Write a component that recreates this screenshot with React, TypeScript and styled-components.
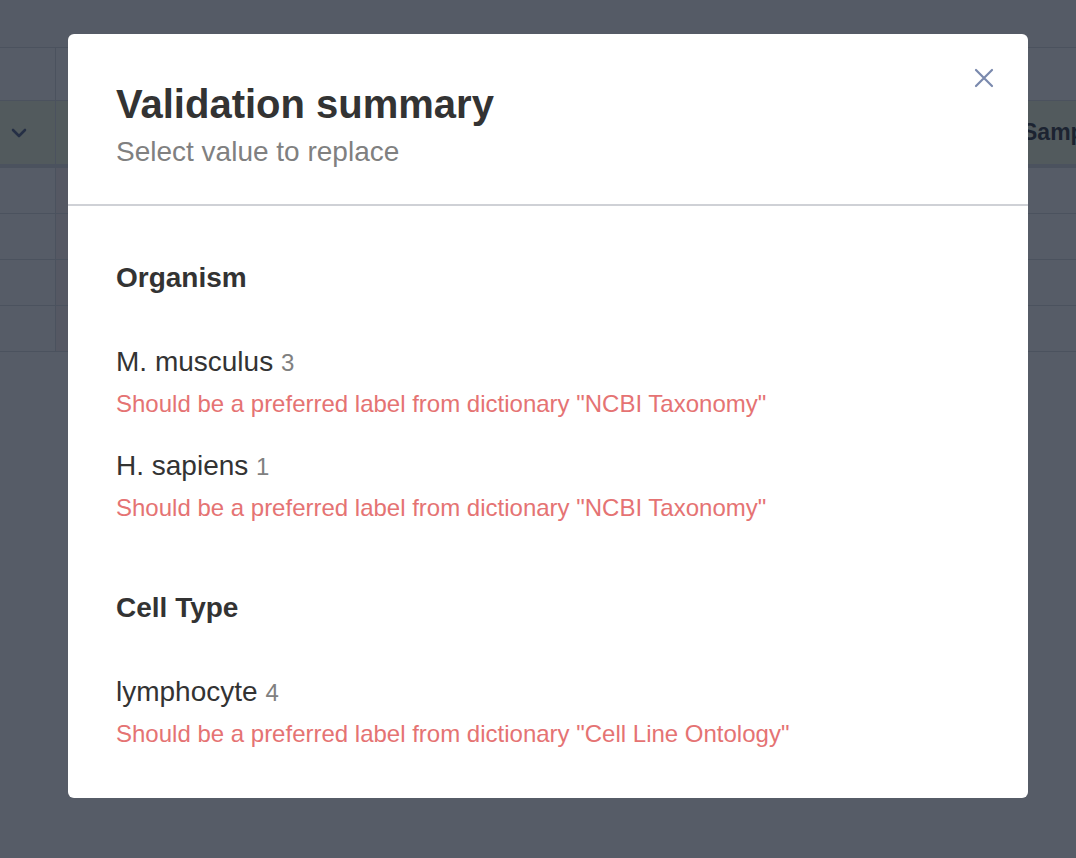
import React from "react";
import styled, { createGlobalStyle } from "styled-components";

const FONT = `"Liberation Sans", Arimo, Arial, Helvetica, sans-serif`;

const GlobalStyle = createGlobalStyle`
  html, body { margin: 0; padding: 0; background: #ffffff; }
  body { font-family: "Liberation Sans", Arial, sans-serif; }
  * { box-sizing: border-box; }
`;

const Page = styled.div`
  width: 1076px;
  height: 858px;
  overflow: hidden;
  background: #ffffff;
  position: relative;
  font-family: ${FONT};
`;

const TopBar = styled.div`
  height: 48px;
  background: #fbfbfc;
  border-bottom: 1px solid #d3d5dc;
`;

const Row = styled.div<{ $height: number; $tint?: string; $border?: number }>`
  display: grid;
  grid-template-columns: 56px 954px 1fr;
  height: ${(p) => p.$height}px;
  background: ${(p) => p.$tint ?? "#ffffff"};
  border-bottom: ${(p) => p.$border ?? 1}px solid #d3d5dc;
`;

const Cell = styled.div<{ $tint?: string }>`
  display: flex;
  align-items: center;
  padding-left: 11px;
  border-right: 1px solid #d3d5dc;
  background: ${(p) => p.$tint ?? "transparent"};
`;

const HeaderText = styled.div`
  display: flex;
  align-items: center;
  padding-left: 12px;
  font-family: ${FONT};
  font-weight: 700;
  font-size: 23px;
  color: #1a1d2b;
`;

const Overlay = styled.div`
  position: absolute;
  inset: 0;
  background: rgba(30, 37, 52, 0.75);
  display: flex;
  align-items: flex-start;
  padding: 34px 0 0 68px;
`;

const Modal = styled.div`
  position: relative;
  width: 960px;
  background: #ffffff;
  border-radius: 6px;
  color: #333333;
  font-family: ${FONT};
`;

const CloseButton = styled.button`
  position: absolute;
  top: 32px;
  right: 32px;
  width: 24px;
  height: 24px;
  padding: 0;
  border: none;
  background: transparent;
  display: flex;
  align-items: center;
  justify-content: center;
  cursor: pointer;
`;

const Header = styled.div`
  padding: 46px 48px 34px;
  border-bottom: 2px solid #cfd1d6;
`;

const Title = styled.h1`
  margin: 0;
  font-family: ${FONT};
  font-size: 40px;
  line-height: 48px;
  font-weight: 700;
  color: #333333;
`;

const Subtitle = styled.div`
  margin-top: 6px;
  font-family: ${FONT};
  font-size: 28px;
  line-height: 36px;
  color: #808080;
`;

const Body = styled.div`
  padding: 54px 48px 49px;
`;

const Section = styled.section`
  & + & {
    margin-top: 67px;
  }
`;

const SectionTitle = styled.h2`
  margin: 0 0 48px;
  font-family: ${FONT};
  font-size: 28px;
  line-height: 36px;
  font-weight: 700;
  color: #333333;
`;

const Item = styled.div`
  cursor: pointer;
  & + & {
    margin-top: 29px;
  }
`;

const ItemName = styled.div`
  font-family: ${FONT};
  font-size: 28px;
  line-height: 36px;
  color: #333333;
`;

const Count = styled.span`
  font-size: 24px;
  color: #808080;
`;

const ErrorText = styled.div`
  margin-top: 8px;
  font-family: ${FONT};
  font-size: 24px;
  line-height: 30px;
  color: #e57373;
`;

const Chevron = () => (
  <svg width="16" height="10" viewBox="0 0 16 10" fill="none">
    <path d="M2 2l6 6 6-6" stroke="#3e4c78" strokeWidth="2.6" strokeLinecap="round" strokeLinejoin="round" />
  </svg>
);

const CloseIcon = () => (
  <svg width="20" height="20" viewBox="0 0 20 20" fill="none">
    <path d="M2 2l16 16M18 2L2 18" stroke="#7a89ad" strokeWidth="2.2" strokeLinecap="round" />
  </svg>
);

const groups = [
  {
    title: "Organism",
    items: [
      { value: "M. musculus", count: 3, error: 'Should be a preferred label from dictionary "NCBI Taxonomy"' },
      { value: "H. sapiens", count: 1, error: 'Should be a preferred label from dictionary "NCBI Taxonomy"' },
    ],
  },
  {
    title: "Cell Type",
    items: [
      { value: "lymphocyte", count: 4, error: 'Should be a preferred label from dictionary "Cell Line Ontology"' },
    ],
  },
];

export default function App() {
  return (
    <Page>
      <GlobalStyle />
      <TopBar />
      <Row $height={53}>
        <Cell />
        <Cell />
        <div />
      </Row>
      <Row $height={67} $tint="#eef8d6" $border={4}>
        <Cell>
          <Chevron />
        </Cell>
        <Cell />
        <HeaderText>Sample</HeaderText>
      </Row>
      {[0, 1, 2, 3].map((i) => (
        <Row key={i} $height={46}>
          <Cell />
          <Cell $tint="#fbeef0" />
          <div />
        </Row>
      ))}
      <Overlay>
        <Modal>
          <CloseButton aria-label="Close">
            <CloseIcon />
          </CloseButton>
          <Header>
            <Title>Validation summary</Title>
            <Subtitle>Select value to replace</Subtitle>
          </Header>
          <Body>
            {groups.map((g) => (
              <Section key={g.title}>
                <SectionTitle>{g.title}</SectionTitle>
                {g.items.map((it) => (
                  <Item key={it.value}>
                    <ItemName>
                      {it.value} <Count>{it.count}</Count>
                    </ItemName>
                    <ErrorText>{it.error}</ErrorText>
                  </Item>
                ))}
              </Section>
            ))}
          </Body>
        </Modal>
      </Overlay>
    </Page>
  );
}
